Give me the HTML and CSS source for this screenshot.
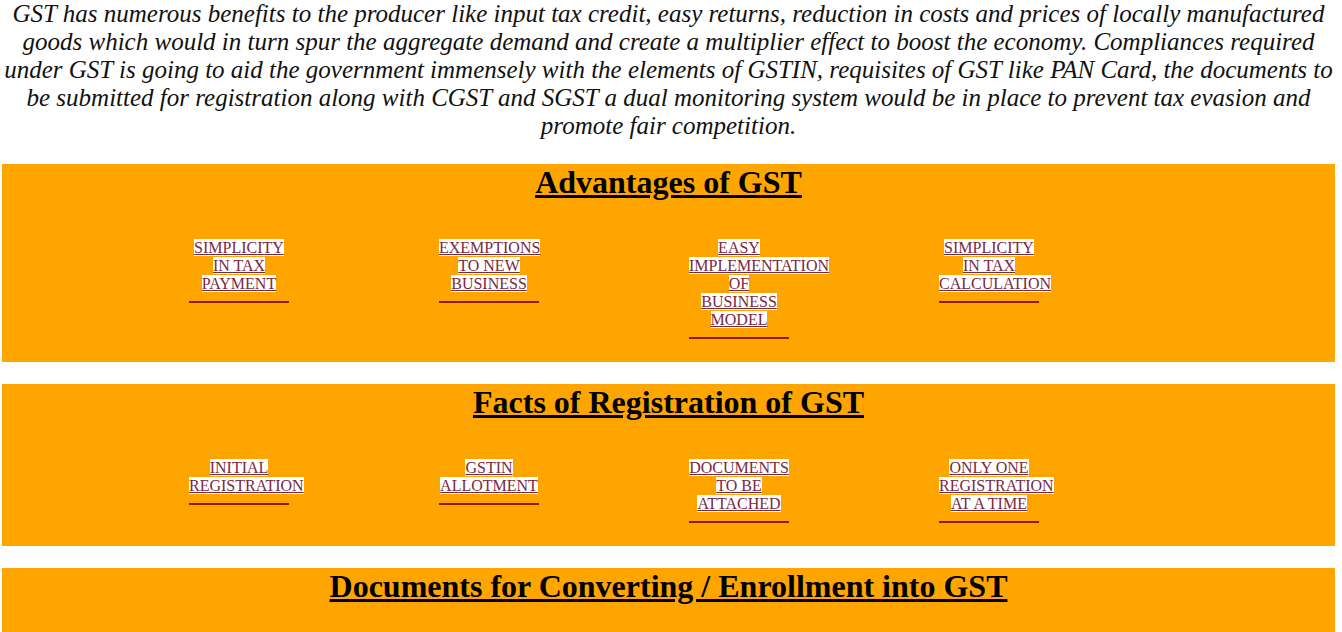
FILE: index.html
```html
<!DOCTYPE html>
<html lang="en">
<head>
<meta charset="utf-8">
<title>GST</title>
<link rel="stylesheet" href="styles.css">
</head>
<body>
<p class="intro">GST has numerous benefits to the producer like input tax credit, easy returns, reduction in costs and prices of locally manufactured goods which would in turn spur the aggregate demand and create a multiplier effect to boost the economy. Compliances required under GST is going to aid the government immensely with the elements of GSTIN, requisites of GST like PAN Card, the documents to be submitted for registration along with CGST and SGST a dual monitoring system would be in place to prevent tax evasion and promote fair competition.</p>

<section class="panel">
  <h2 class="panel-title">Advantages of GST</h2>
  <div class="items">
    <div class="item"><a href="#" class="item-link">SIMPLICITY IN TAX PAYMENT</a></div>
    <div class="item"><a href="#" class="item-link">EXEMPTIONS TO NEW BUSINESS</a></div>
    <div class="item"><a href="#" class="item-link">EASY IMPLEMENTATION OF BUSINESS MODEL</a></div>
    <div class="item"><a href="#" class="item-link">SIMPLICITY IN TAX CALCULATION</a></div>
  </div>
</section>

<section class="panel">
  <h2 class="panel-title">Facts of Registration of GST</h2>
  <div class="items">
    <div class="item"><a href="#" class="item-link">INITIAL REGISTRATION</a></div>
    <div class="item"><a href="#" class="item-link">GSTIN ALLOTMENT</a></div>
    <div class="item"><a href="#" class="item-link">DOCUMENTS TO BE ATTACHED</a></div>
    <div class="item"><a href="#" class="item-link">ONLY ONE REGISTRATION AT A TIME</a></div>
  </div>
</section>

<section class="panel panel-last">
  <h2 class="panel-title">Documents for Converting / Enrollment into GST</h2>
</section>
</body>
</html>
```

FILE: styles.css
```css
html, body {
  margin: 0;
  padding: 0;
  background: #ffffff;
}

body {
  font-family: "Liberation Serif", "Times New Roman", "DejaVu Serif", serif;
  color: #000;
  padding: 0 7px 0 2px;
}

.intro {
  margin: 0 0 24px 0;
  font-family: "Liberation Serif", "Times New Roman", "DejaVu Serif", serif;
  font-style: italic;
  font-size: 25px;
  line-height: 28px;
  text-align: center;
  color: #111;
}

.panel {
  background: #ffa500;
  padding: 3px 0 23px 0;
  margin-bottom: 22px;
}

.panel-last {
  min-height: 160px;
}

.panel-title {
  margin: 0;
  font-size: 32px;
  line-height: 30px;
  padding-bottom: 2px;
  font-weight: bold;
  text-align: center;
  text-decoration: underline;
  color: #000;
}

.items {
  display: flex;
  align-items: flex-start;
  gap: 150px;
  padding-left: 187px;
  margin-top: 40px;
}

.item {
  width: 100px;
  text-align: center;
  font-size: 16px;
  line-height: 18px;
  padding-bottom: 8px;
  border-bottom: 2px solid #8b1e00;
}

.item-link {
  background: #ffffff;
  color: #7a2840;
  text-decoration: underline;
}
```
